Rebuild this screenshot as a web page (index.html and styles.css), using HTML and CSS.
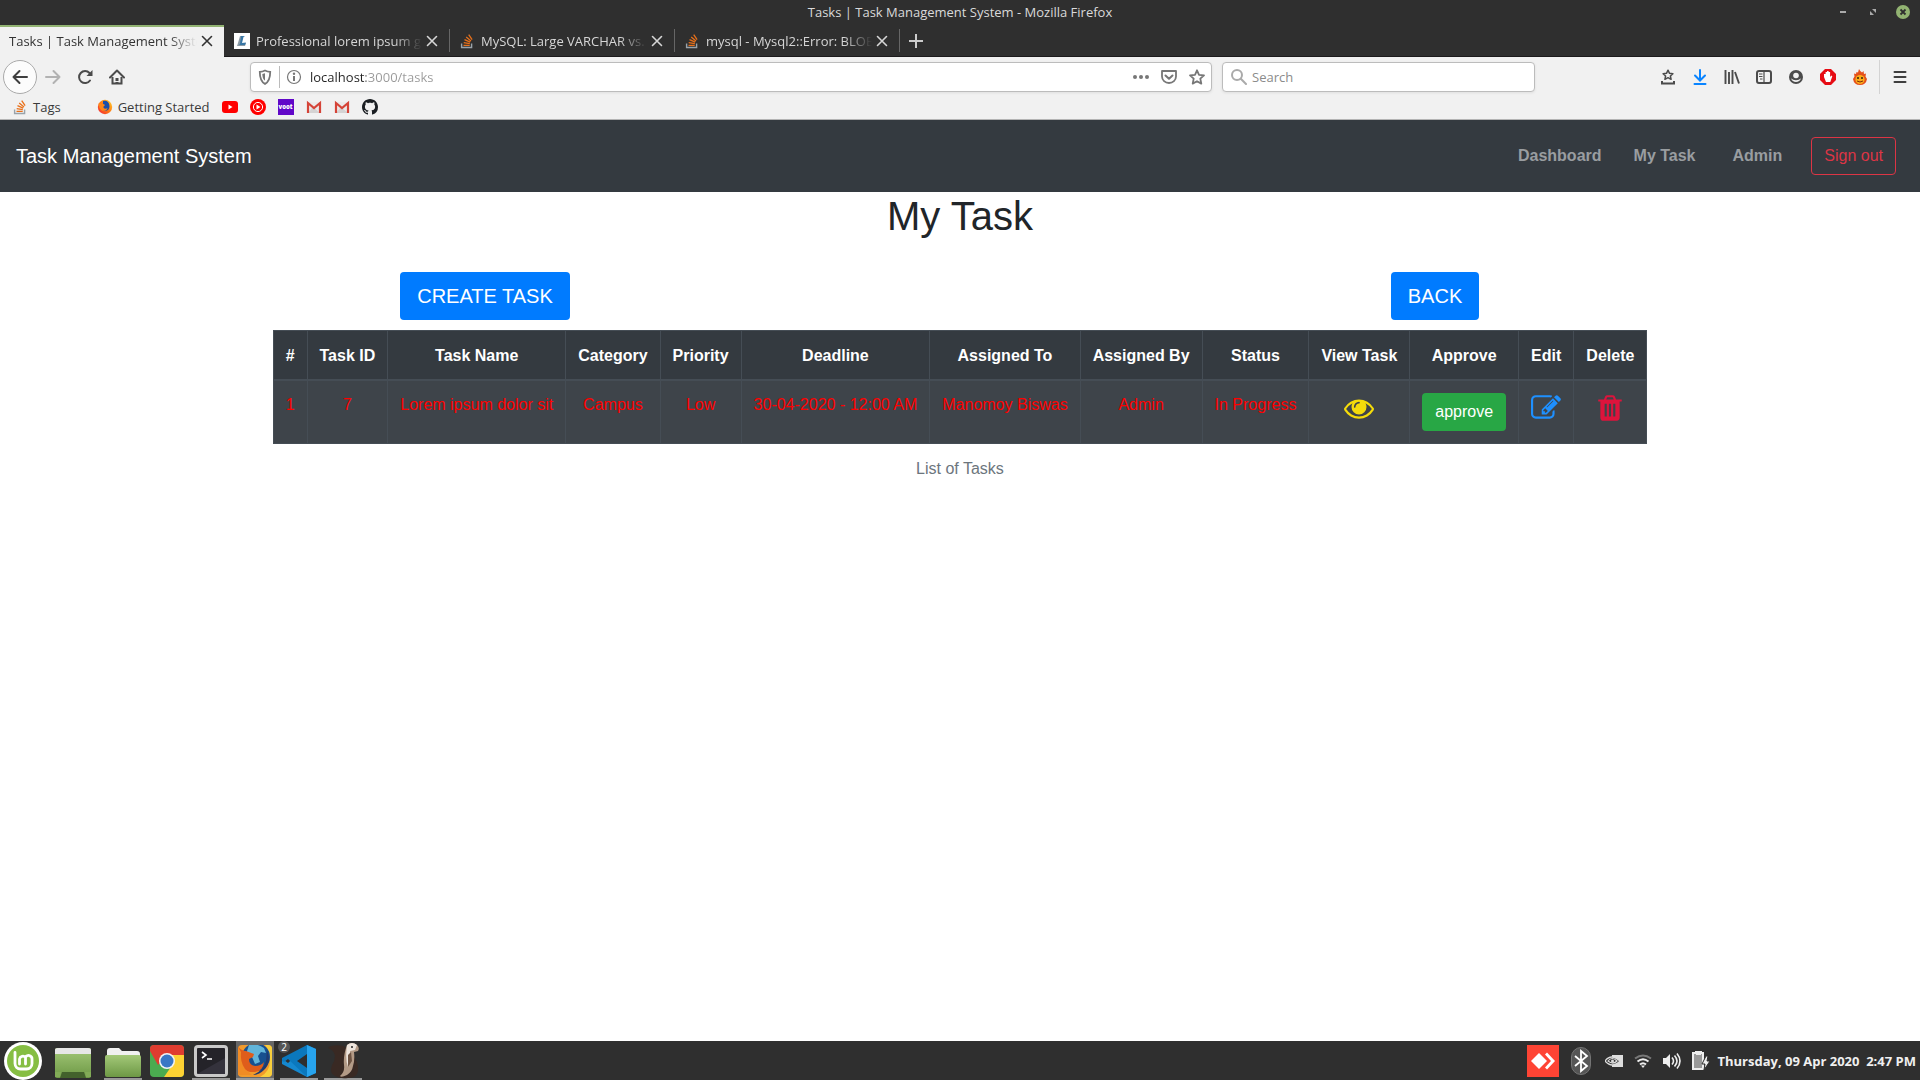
FILE: index.html
```html
<!DOCTYPE html>
<html lang="en">
<head>
<meta charset="utf-8">
<meta name="viewport" content="width=device-width, initial-scale=1">
<title>Tasks | Task Management System</title>
<link rel="stylesheet" href="styles.css">
</head>
<body>
<svg class="defs" aria-hidden="true">
  <defs>
    <symbol id="close" viewBox="0 0 16 16"><path d="M3.500 3.500l9 9M12.500 3.500l-9 9" stroke="currentColor" stroke-width="1.600" stroke-linecap="round"/></symbol>
    <symbol id="stack" viewBox="0 0 16 16"><path d="M2.600 10.500v4h10v-4" fill="none" stroke="#9aa3aa" stroke-width="1.400"/><path d="M4.500 12.300h6.200M4.700 9.600l6.100 1.100M5.500 6.700l5.700 2.500M7.200 3.900l4.800 4M9.700 1.600l3.400 5" stroke="#e8701a" stroke-width="1.300"/></symbol>
    <symbol id="gmail" viewBox="0 0 16 16"><path d="M2 3h12v11H2z" fill="#eceaea"/><path d="M2 14l5-6 7 6z" fill="#d5d3d3"/><path d="M2 14V4l6 5 6-5v10" fill="none" stroke="#d54438" stroke-width="2.200"/></symbol>
    <linearGradient id="green" x1="0" y1="0" x2="0" y2="1"><stop offset="0" stop-color="#a3c878"/><stop offset="1" stop-color="#6d9845"/></linearGradient>
    <linearGradient id="flame" x1="0" y1="1" x2="1" y2="0"><stop offset="0" stop-color="#f0203c"/><stop offset=".5" stop-color="#ff7a12"/><stop offset="1" stop-color="#ffd633"/></linearGradient>
  </defs>
</svg>

<header class="browser">
  <div class="titlebar">
    <span class="window-title">Tasks | Task Management System - Mozilla Firefox</span>
    <div class="window-controls">
      <button aria-label="Minimize"><svg width="14" height="14" viewBox="0 0 14 14"><path d="M4 7h6" stroke="#aaa" stroke-width="2"/></svg></button>
      <button aria-label="Restore"><svg width="14" height="14" viewBox="0 0 14 14"><path d="M6 4h4v4zM4 6v4h4z" fill="#aaa"/></svg></button>
      <button aria-label="Close window"><svg width="14" height="14" viewBox="0 0 14 14"><circle cx="7" cy="7" r="7" fill="#92b372"/><path d="M4.500 4.500l5 5M9.500 4.500l-5 5" stroke="#2f2f2f" stroke-width="1.800"/></svg></button>
    </div>
  </div>

  <div class="tabs">
    <div class="tab tab-active"><span class="tab-label">Tasks | Task Management System</span><button class="tab-close" aria-label="Close tab"><svg width="16" height="16"><use href="#close"/></svg></button></div>
    <div class="tab"><svg width="16" height="16" viewBox="0 0 16 16"><path d="M0 0h16v16H0z" fill="#fff"/><path d="M6 3h3L7 10h5l-1 3H3l1-3z" fill="#8b9aa5"/><path d="M7 3h4l-1.500 1L8 10l4-.5-1 2.500H5l1-1z" fill="#3977a5"/></svg><span class="tab-label">Professional lorem ipsum g</span><button class="tab-close" aria-label="Close tab"><svg width="16" height="16"><use href="#close"/></svg></button></div>
    <div class="tab"><svg width="16" height="16"><use href="#stack"/></svg><span class="tab-label">MySQL: Large VARCHAR vs.</span><button class="tab-close" aria-label="Close tab"><svg width="16" height="16"><use href="#close"/></svg></button></div>
    <div class="tab"><svg width="16" height="16"><use href="#stack"/></svg><span class="tab-label">mysql - Mysql2::Error: BLOB</span><button class="tab-close" aria-label="Close tab"><svg width="16" height="16"><use href="#close"/></svg></button></div>
    <button class="tab-new" aria-label="New tab"><svg width="16" height="16" viewBox="0 0 16 16"><path d="M8 1v14M1 8h14" stroke="#ccc" stroke-width="2"/></svg></button>
  </div>

  <div class="toolbar">
    <div class="nav-buttons">
      <button class="back" aria-label="Back"><svg width="16" height="16" viewBox="0 0 16 16"><path d="M15 8H1.500M7.500 2L1.500 8l6 6" fill="none" stroke="#3f3f3f" stroke-width="2" stroke-linecap="round" stroke-linejoin="round"/></svg></button>
      <button aria-label="Forward"><svg width="16" height="16" viewBox="0 0 16 16"><path d="M1 8h13.500M8.500 2l6 6-6 6" fill="none" stroke="#b2b2b2" stroke-width="2" stroke-linecap="round" stroke-linejoin="round"/></svg></button>
      <button aria-label="Reload"><svg width="16" height="16" viewBox="0 0 16 16"><path d="M13 11.500A6 6 0 1 1 12.500 4" fill="none" stroke="#4b4b4b" stroke-width="2" stroke-linecap="round"/><path d="M15.500 1v6H9.500z" fill="#4b4b4b"/></svg></button>
      <button aria-label="Home"><svg width="16" height="16" viewBox="0 0 16 16"><path d="M1 8.500L8 1.500l7 7" fill="none" stroke="#4b4b4b" stroke-width="2" stroke-linecap="round" stroke-linejoin="round"/><path d="M3.500 8v6.500h9V8" fill="none" stroke="#4b4b4b" stroke-width="2"/><path d="M6.500 9h3v3h-3zM6.500 13h3v2h-3z" fill="#4b4b4b"/></svg></button>
    </div>
    <div class="toolbar-space"></div>
    <div class="field url-field">
      <svg width="16" height="16" viewBox="0 0 16 16"><path d="M8 1.500c2 1 3.500 1.300 5.200 1.400 0 6-1 9.600-5.200 12-4.200-2.400-5.200-6-5.200-12C4.500 2.800 6 2.500 8 1.500z" fill="none" stroke="#777" stroke-width="1.800"/><path d="M8 4.200v7.600c-2-1.700-2.600-4-2.700-6.900z" fill="#777"/></svg>
      <span class="field-line"></span>
      <svg width="16" height="16" viewBox="0 0 16 16"><circle cx="8" cy="8" r="6.500" fill="none" stroke="#777" stroke-width="1.200"/><path d="M8 7v5" stroke="#777" stroke-width="2"/><circle cx="8" cy="4.800" r="1.200" fill="#777"/></svg>
      <input class="url-input" type="text" aria-label="Address" value="localhost:3000/tasks">
      <button aria-label="Page actions"><svg width="16" height="16" viewBox="0 0 16 16"><g fill="#777"><circle cx="2" cy="8" r="2"/><circle cx="8" cy="8" r="2"/><circle cx="14" cy="8" r="2"/></g></svg></button>
      <button aria-label="Save to Pocket"><svg width="16" height="16" viewBox="0 0 16 16"><path d="M1 2h14v5.500a7 6.500 0 0 1-14 0z" fill="none" stroke="#777" stroke-width="1.800" stroke-linejoin="round"/><path d="M4.500 6.500L8 9.800l3.500-3.300" fill="none" stroke="#777" stroke-width="2" stroke-linecap="round" stroke-linejoin="round"/></svg></button>
      <button aria-label="Bookmark this page"><svg width="16" height="16" viewBox="0 0 16 16"><path d="M8 1.300l2 4.500 5 .5-3.700 3.300 1 5L8 12.200l-4.300 2.400 1-5L1 6.300l5-.5z" fill="none" stroke="#777" stroke-width="1.800" stroke-linejoin="round"/></svg></button>
    </div>
    <div class="field search-field">
      <svg width="16" height="16" viewBox="0 0 16 16"><circle cx="6" cy="6" r="5" fill="none" stroke="#aaa" stroke-width="2"/><path d="M9.800 9.800l5.200 5.200" stroke="#aaa" stroke-width="2" stroke-linecap="round"/></svg>
      <input type="search" aria-label="Search" placeholder="Search">
    </div>
    <div class="toolbar-space"></div>
    <div class="tool-buttons">
      <button aria-label="Bookmarks menu"><svg width="16" height="16" viewBox="0 0 16 16"><path d="M8 1.200l1.500 3.100 3.400.4-2.500 2.300.7 3.300L8 8.700l-3.100 1.600.7-3.300-2.500-2.300 3.400-.4z" fill="none" stroke="#4b4b4b" stroke-width="1.500" stroke-linejoin="round"/><path d="M2 12v2.500h12V12" fill="none" stroke="#4b4b4b" stroke-width="2"/></svg></button>
      <button aria-label="Downloads"><svg width="16" height="16" viewBox="0 0 16 16"><path d="M8 1v10M3 6.500l5 5 5-5M2.500 15h11" fill="none" stroke="#0a84ff" stroke-width="2" stroke-linecap="round"/></svg></button>
      <button aria-label="Library"><svg width="16" height="16" viewBox="0 0 16 16"><path d="M1.500 1v14M5 3v12M8.500 1v14M11 3l4 11.500" stroke="#4b4b4b" stroke-width="1.900"/></svg></button>
      <button aria-label="Sidebars"><svg width="16" height="16" viewBox="0 0 16 16"><rect x="1" y="2" width="14" height="12" rx="2" fill="none" stroke="#4b4b4b" stroke-width="2"/><path d="M8 2v12" stroke="#4b4b4b" stroke-width="1.200"/><path d="M3 5h3.500M3 7.500h3.500M4 10h2.500" stroke="#4b4b4b"/></svg></button>
      <button aria-label="Account"><svg width="16" height="16" viewBox="0 0 16 16"><circle cx="8" cy="8" r="7" fill="#4b4b4b"/><circle cx="8" cy="6.500" r="2.800" fill="#f1f1f1"/><path d="M3.200 9.300c1.800 2.500 7.800 2.500 9.600 0-.6 5-9 5-9.600 0z" fill="#f1f1f1"/></svg></button>
      <button aria-label="Ad blocker"><svg width="16" height="16" viewBox="0 0 16 16"><path d="M5 0h6l5 5v6l-5 5H5l-5-5V5z" fill="#e60c14"/><path d="M4 8V5h1.600V3h1.500V2h1.500v1h1.500v5l1.200-1.500 1 .8-2 5.700H6z" fill="#fff"/></svg></button>
      <button aria-label="Flame extension"><svg width="16" height="16" viewBox="0 0 16 16"><path d="M7 0q1 2 3 3.500L11.500 2l.5 3 2-.5-.5 3L15 10q-1 6-7 6T1 10l1.500-2.500L2 4.500l2 .5.500-2L6 3.500z" fill="#e5501b"/><ellipse cx="8" cy="10.500" rx="4.600" ry="4.600" fill="#fbac19"/><circle cx="6" cy="9" r="1" fill="#33200b"/><circle cx="10" cy="9" r="1" fill="#33200b"/><path d="M5 12q3 2 6 0" fill="none" stroke="#7b2a0a"/></svg></button>
    </div>
    <button class="menu" aria-label="Open menu"><svg width="16" height="16" viewBox="0 0 16 16"><path d="M2.500 3h11M2.500 8h11M2.500 13h11" stroke="#3f3f3f" stroke-width="2" stroke-linecap="round"/></svg></button>
  </div>

  <nav class="bookmarks" aria-label="Bookmarks">
    <a class="bookmark-tags" href="#"><svg width="16" height="16"><use href="#stack"/></svg>Tags</a>
    <a href="#"><svg width="16" height="16" viewBox="0 0 16 16"><circle cx="8" cy="8" r="7.200" fill="url(#flame)"/><path d="M6 2c3-1 6.500.5 6.500 5.500 0 3.500-3 5-5.500 4C4 10.500 4.500 7 6 5.500z" fill="#1b4fa8"/><path d="M1.500 4.500C4 4 5 5 7.500 5.500 8.500 7 6 7 6.500 8.500s3 1.500 4 .5c-.5 3.500-6 4-8 0z" fill="#ff8717"/></svg>Getting Started</a>
    <a href="#" aria-label="YouTube"><svg width="16" height="16" viewBox="0 0 16 16"><rect y="2" width="16" height="12" rx="3" fill="#f00"/><path d="M6.500 5.500v5l4-2.500z" fill="#fff"/></svg></a>
    <a href="#" aria-label="YouTube Music"><svg width="16" height="16" viewBox="0 0 16 16"><circle cx="8" cy="8" r="8" fill="#f00"/><circle cx="8" cy="8" r="4.600" fill="none" stroke="#fff"/><path d="M6.500 5.500v5l4-2.500z" fill="#fff"/></svg></a>
    <a class="voot" href="#">voot</a>
    <a href="#" aria-label="Gmail"><svg width="16" height="16"><use href="#gmail"/></svg></a>
    <a href="#" aria-label="Gmail second account"><svg width="16" height="16"><use href="#gmail"/></svg></a>
    <a href="#" aria-label="GitHub"><svg width="16" height="16" viewBox="0 0 16 16"><path fill="#1b1f23" d="M8 0C3.580 0 0 3.580 0 8c0 3.540 2.290 6.530 5.470 7.590.4.070.55-.17.55-.38 0-.19-.01-.82-.01-1.490-2.010.37-2.530-.49-2.690-.94-.09-.23-.48-.94-.82-1.130-.28-.15-.68-.52-.01-.53.63-.01 1.080.58 1.230.82.72 1.210 1.870.87 2.330.66.070-.52.28-.87.51-1.070-1.780-.2-3.640-.89-3.640-3.950 0-.87.31-1.590.82-2.150-.08-.2-.36-1.020.08-2.120 0 0 .67-.21 2.200.82.64-.18 1.320-.27 2-.27s1.360.09 2 .27c1.530-1.040 2.200-.82 2.200-.82.44 1.100.16 1.920.08 2.120.51.56.82 1.270.82 2.150 0 3.070-1.870 3.750-3.650 3.950.29.25.54.73.54 1.480 0 1.070-.01 1.930-.01 2.200 0 .21.15.46.55.38A8.010 8.010 0 0 0 16 8c0-4.420-3.580-8-8-8z"/></svg></a>
  </nav>
</header>

<div class="page">
  <nav class="navbar" aria-label="Main">
    <a class="brand" href="#">Task Management System</a>
    <a class="nav-link" href="#">Dashboard</a>
    <a class="nav-link" href="#">My Task</a>
    <span class="nav-user">Admin</span>
    <a class="btn btn-outline" href="#">Sign out</a>
  </nav>
  <main>
    <h1>My Task</h1>
    <div class="actions">
      <div><a class="btn btn-lg" href="#">CREATE TASK</a></div>
      <div><a class="btn btn-lg" href="#">BACK</a></div>
    </div>
    <table class="tasks">
      <caption>List of Tasks</caption>
      <thead>
        <tr><th>#</th><th>Task ID</th><th>Task Name</th><th>Category</th><th>Priority</th><th>Deadline</th><th>Assigned To</th><th>Assigned By</th><th>Status</th><th>View Task</th><th>Approve</th><th>Edit</th><th>Delete</th></tr>
      </thead>
      <tbody>
        <tr>
          <td>1</td><td>7</td><td>Lorem ipsum dolor sit</td><td>Campus</td><td>Low</td><td>30-04-2020 - 12:00 AM</td><td>Manomoy Biswas</td><td>Admin</td><td>In Progress</td>
          <td><a class="icon icon-view" href="#" aria-label="View"><svg width="30" height="30" viewBox="0 0 1792 1792"><path d="M1664 960q-152-236-381-353 61 104 61 225 0 185-131.500 316.500t-316.500 131.500-316.500-131.500-131.500-316.500q0-121 61-225-229 117-381 353 133 205 333.500 326.500t434.500 121.500 434.500-121.500 333.500-326.500zm-720-384q0-20-14-34t-34-14q-125 0-214.500 89.500t-89.500 214.500q0 20 14 34t34 14 34-14 14-34q0-86 61-147t147-61q20 0 34-14t14-34zm848 384q0 34-20 69-140 230-376.500 368.500t-499.500 138.500-499.500-139-376.500-368q-20-35-20-69t20-69q140-229 376.500-368t499.500-139 499.500 139 376.500 368q20 35 20 69z"/></svg></a></td>
          <td><button class="btn btn-success">approve</button></td>
          <td><a class="icon icon-edit" href="#" aria-label="Edit"><svg width="30" height="30" viewBox="0 0 1792 1792"><path d="M888 1184l116-116-152-152-116 116v56h96v96h56zm440-720q-16-16-33 1l-350 350q-17 17-1 33t33-1l350-350q17-17 1-33zm80 594v190q0 119-84.500 203.500t-203.500 84.500h-832q-119 0-203.500-84.500t-84.500-203.500v-832q0-119 84.500-203.500t203.500-84.500h832q63 0 117 25 15 7 18 23 3 17-9 29l-49 49q-14 14-32 8-23-6-45-6h-832q-66 0-113 47t-47 113v832q0 66 47 113t113 47h832q66 0 113-47t47-113v-126q0-13 9-22l64-64q15-15 35-7t20 29zm-96-738l288 288-672 672h-288v-288zm444 132l-92 92-288-288 92-92q28-28 68-28t68 28l152 152q28 28 28 68t-28 68z"/></svg></a></td>
          <td><a class="icon icon-delete" href="#" aria-label="Delete"><svg width="30" height="30" viewBox="0 0 1792 1792"><path d="M704 1376v-704q0-14-9-23t-23-9h-64q-14 0-23 9t-9 23v704q0 14 9 23t23 9h64q14 0 23-9t9-23zm256 0v-704q0-14-9-23t-23-9h-64q-14 0-23 9t-9 23v704q0 14 9 23t23 9h64q14 0 23-9t9-23zm256 0v-704q0-14-9-23t-23-9h-64q-14 0-23 9t-9 23v704q0 14 9 23t23 9h64q14 0 23-9t9-23zm-544-992h448l-48-117q-7-9-17-11h-317q-10 2-17 11zm928 32v64q0 14-9 23t-23 9h-96v948q0 83-47 143.500t-113 60.500h-832q-66 0-113-58.500t-47-141.500v-952h-96q-14 0-23-9t-9-23v-64q0-14 9-23t23-9h309l70-167q15-37 54-63t79-26h320q40 0 79 26t54 63l70 167h309q14 0 23 9t9 23z"/></svg></a></td>
        </tr>
      </tbody>
    </table>
  </main>
</div>

<footer class="taskbar">
  <button class="start" aria-label="Menu"><svg width="38" height="38" viewBox="0 0 38 38"><circle cx="19" cy="19" r="19" fill="#fff"/><circle cx="19" cy="19" r="16" fill="#86be43"/><path d="M11 10.500v11a5.500 5.500 0 0 0 5.500 5.500h6a5.500 5.500 0 0 0 5.500-5.500V17a3.400 3.400 0 0 0-6.500-1.500A3.400 3.400 0 0 0 15.500 17v5M21.500 15.500V22" fill="none" stroke="#fff" stroke-width="2.800" stroke-linecap="round"/></svg></button>
  <button class="desktop" aria-label="Show desktop"><svg width="38" height="38" viewBox="0 0 38 38"><rect x="1" y="6" width="36" height="30" rx="2" fill="url(#green)"/><path d="M1 8q0-2 3-2h30q3 0 3 2v4H1z" fill="#e6e6e6"/><path d="M6 36l2-6h22l2 6z" fill="#43622c"/><path d="M1 30h6l-1 5H1zM37 30h-6l1 5h5z" fill="#82ab57"/></svg></button>
  <button class="launcher running" aria-label="Files"><svg width="38" height="38" viewBox="0 0 38 38"><path d="M3 9q0-3 3-3h9l3 3h15q3 0 3 3v5H3z" fill="#f0f0f0"/><rect x="1" y="13" width="36" height="22" rx="2" fill="url(#green)"/></svg></button>
  <button class="launcher" aria-label="Chrome"><svg width="38" height="38" viewBox="0 0 38 38"><clipPath id="chrome"><rect x="2" y="3" width="34" height="32" rx="4"/></clipPath><g clip-path="url(#chrome)"><path d="M2 2h34v33H2z" fill="#4bab50"/><path d="M2 2h34v11H19l-9 10L2 9z" fill="#df3c30"/><path d="M19 13h17v22H16l9-13z" fill="#fdd233"/></g><circle cx="19" cy="19" r="8" fill="#f3f3f3"/><circle cx="19" cy="19" r="6.500" fill="#3977c5"/></svg></button>
  <button class="launcher running" aria-label="Terminal"><svg width="38" height="38" viewBox="0 0 38 38"><rect x="2" y="3" width="34" height="32" rx="4" fill="#c9c9c9"/><rect x="5" y="6" width="28" height="26" rx="1" fill="#242329"/><path d="M5 32L33 16v16z" fill="#34323c"/><path d="M10 10l4 3-4 3M15 17h5" fill="none" stroke="#fff" stroke-width="1.600"/></svg></button>
  <button class="launcher running current" aria-label="Firefox"><svg width="38" height="38" viewBox="0 0 38 38"><clipPath id="fox"><rect x="2" y="3" width="34" height="32" rx="4"/></clipPath><g clip-path="url(#fox)"><path d="M2 3h34v32H2z" fill="#f19a2b"/><path d="M29 3h7v32H24q10-5 10-17 0-9-5-15z" fill="#f8cf3c"/><circle cx="20" cy="15" r="14" fill="#17508f"/><path d="M13 3q8-2 15 3l2 5-5-1-3 4 2 6-5 2-3-7-6-3z" fill="#62b5d9"/><path d="M2 5q4 4 8 4l8 3-1 3-4 2q0 6 6 7 6 0 9-4-1 9-9 10Q5 31 2 18z" fill="#df5d1b"/><path d="M2 5l3 5q-1 10 4 17l7 6H2z" fill="#f08c24"/><path d="M31 8q5 12-3 20-5 5-11 5 11-5 13-14z" fill="#203a70"/></g></svg></button>
  <button class="launcher running" aria-label="Visual Studio Code, 2 windows"><svg width="38" height="38" viewBox="0 0 38 38"><path d="M27 3L8 21l-4-3-2 1v3l25 13z" fill="#1588cf"/><path d="M27 35L8 17l-4 3-2-1v-3L27 3l9 4v24z" fill="#0b78bd"/><path d="M27 3l9 4v24l-9 4z" fill="#27a4ee"/><path d="M27 12v14l-10-7z" fill="#2e2e2e"/></svg><span class="badge">2</span></button>
  <button class="launcher running" aria-label="DBeaver"><svg width="38" height="38" viewBox="0 0 38 38"><path d="M20 4Q8 2 4 6q6 2 7 8 0 5-3 9-3 8 3 11 5 3 13 2 9 0 10-7 1-10-6-16z" fill="#392923"/><path d="M23 3q5-4 10 0 3 3 1 6l-4 1q1 8-1 14-1 6-6 9-6 3-7 1 5-4 4-11-1-9 3-20z" fill="#b39a86"/><path d="M23 3q5-4 10 0l-2 5-5 1q2 7-2 16-3-8-1-22z" fill="#eee5dd"/><path d="M24 13l3-3 1 9-4 6z" fill="#6d5342"/><circle cx="28" cy="5" r="1" fill="#222"/></svg></button>

  <div class="tray">
    <svg width="32" height="32" viewBox="0 0 32 32"><path d="M0 0h32v32H0z" fill="#fe4434"/><path d="M12 8l8 8-8 8-8-8z" fill="#fff"/><path d="M18 9.500l2-2 8 8.500-8 8.500-2-2 6-6.500z" fill="#fff"/></svg>
    <svg class="tray-bluetooth" width="20" height="28" viewBox="0 0 20 28"><rect x=".5" y=".5" width="19" height="27" rx="9.500" fill="#555" stroke="#747474"/><path d="M4 9l12 10-6 5V4l6 5L4 19" fill="none" stroke="#fff" stroke-width="1.800"/></svg>
    <svg width="18" height="14" viewBox="0 0 18 14"><path d="M7 1h11v12H7z" fill="#ddd"/><path d="M0 7q6-8 15 0-8 8-15 0z" fill="#2f2f2f" stroke="#ddd" stroke-width="1.300"/><path d="M3 7q4-5 9 0-4 4-9 0z" fill="none" stroke="#ddd" stroke-width="1.200"/><circle cx="7.500" cy="7" r="1.500" fill="#ddd"/></svg>
    <svg width="18" height="14" viewBox="0 0 18 14"><path d="M1 4.500q8-6 16 0" fill="none" stroke="#777" stroke-width="2"/><path d="M3.500 7.500q5.500-4.500 11 0M6 10.500q3-2.500 6 0" fill="none" stroke="#eee" stroke-width="2"/><path d="M7 11.500h4L9 14z" fill="#eee"/></svg>
    <svg width="18" height="18" viewBox="0 0 18 18"><path d="M0 6h3l4-4v14l-4-4H0z" fill="#eee"/><path d="M9 5.500q3 3.500 0 7M11.500 3.500q5 5.500 0 11M14 1.500q6 7.500 0 15" fill="none" stroke="#eee" stroke-width="1.600"/></svg>
    <svg width="18" height="20" viewBox="0 0 18 20"><path d="M4 2V1h5v1h2v16H1V2z" fill="#999" stroke="#eee" stroke-width="2"/><path d="M4 0h5v4H4z" fill="#eee"/><path d="M14 5l-4 8h3l-1 6 6-9h-3l1-5z" fill="#eee" stroke="#2f2f2f"/></svg>
    <time class="clock" datetime="2020-04-09T14:47">Thursday, 09 Apr 2020&nbsp; 2:47 PM</time>
  </div>
</footer>
</body>
</html>
```
FILE: styles.css
```css
*,
*::before,
*::after {
  box-sizing: border-box;
}

body {
  margin: 0;
  min-height: 100vh;
  display: flex;
  flex-direction: column;
  background: #fff;
  color: #212529;
  font: 16px/24px "Liberation Sans", Arial, sans-serif;
}

a {
  color: inherit;
  text-decoration: none;
}

button,
input {
  margin: 0;
  padding: 0;
  border: 0;
  background: none;
  color: inherit;
  font: inherit;
}

svg {
  display: block;
  flex: none;
}

.defs {
  position: absolute;
  width: 0;
  height: 0;
}

/* Browser window */

.browser {
  background: #f1f1f1;
  border-bottom: 1px solid #b4b4b4;
  font: 13px/20px "Open Sans", "Noto Sans", sans-serif;
  color: #3a3a3a;
}

.titlebar {
  display: grid;
  grid-template-columns: 1fr auto 1fr;
  align-items: center;
  height: 25px;
  padding: 0 10px 1px;
  background: #2f2f2f;
  color: #dadada;
}

.window-title {
  grid-column: 2;
  font-weight: 500;
}

.window-controls {
  display: flex;
  justify-content: flex-end;
  gap: 16px;
}

.tabs {
  display: flex;
  height: 32px;
  background: #2f2f2f;
  border-bottom: 1px solid #1c1a1c;
  color: #d6d6d6;
}

.tab {
  position: relative;
  display: flex;
  align-items: center;
  width: 225px;
  padding: 0 9px 0 10px;
}

.tab::after {
  content: "";
  position: absolute;
  right: -1px;
  top: 4px;
  bottom: 4px;
  width: 1px;
  background: #666;
}

.tab-label {
  flex: 1;
  min-width: 0;
  margin: 0 2px 0 6px;
  overflow: hidden;
  white-space: nowrap;
  mask-image: linear-gradient(to left, transparent, #000 28px);
}

.tab-active {
  margin-bottom: -1px;
  width: 224px;
  padding: 0 9px 2px;
  border-top: 2px solid #92b372;
  background: #f1f1f1;
  color: #333;
}

.tab-active .tab-label {
  margin-left: 0;
}

.tab-active::after {
  content: none;
}

.tab-new {
  padding: 0 9px;
}

.toolbar {
  display: flex;
  align-items: center;
  height: 40px;
}

.nav-buttons,
.tool-buttons {
  display: flex;
  align-items: center;
}

.nav-buttons {
  padding-left: 3px;
}

.nav-buttons button,
.tool-buttons button {
  display: grid;
  place-items: center;
  width: 32px;
  height: 34px;
}

.nav-buttons .back {
  width: 34px;
  border: 1px solid #aaa;
  border-radius: 50%;
  background: #fcfcfc;
}

.toolbar-space {
  flex: 117 1 117px;
}

.field {
  display: flex;
  align-items: center;
  gap: 12px;
  height: 30px;
  border: 1px solid #bcbcbc;
  border-radius: 4px;
  background: #fff;
  box-shadow: 0 1px 3px rgba(0, 0, 0, 0.08);
}

.field input {
  flex: 1;
  min-width: 0;
  outline: 0;
}

.field input::placeholder {
  color: #8b8b8b;
  opacity: 1;
}

.url-field {
  flex: 962 1 962px;
  padding: 0 6px;
}

.url-field > :first-child,
.field-line {
  margin-right: -6px;
}

.field-line {
  width: 1px;
  height: 22px;
  background: #bbb;
}

/* The host is darker than the rest of the address */
.url-field .url-input {
  margin-left: -4px;
  color: #999;
  background: linear-gradient(to right, #222 56px, #999 56px);
  background-clip: text;
  -webkit-background-clip: text;
  -webkit-text-fill-color: transparent;
}

.search-field {
  flex: 313 1 313px;
  gap: 5px;
  margin-left: 10px;
  padding: 0 8px;
}

.menu {
  display: grid;
  place-items: center;
  width: 41px;
  height: 34px;
  margin-left: 3px;
  border-left: 1px solid #d3d3d3;
}

.bookmarks {
  display: flex;
  align-items: center;
  gap: 12px;
  height: 22px;
  padding: 0 12px 2px;
}

.bookmarks a {
  display: flex;
  align-items: center;
  gap: 5px;
}

.bookmarks .bookmark-tags {
  margin-right: 24px;
}

.bookmarks .voot {
  justify-content: center;
  width: 16px;
  height: 16px;
  background: #6108c8;
  color: #fff;
  font-size: 6px;
  font-weight: 800;
}

/* Page */

.page {
  flex: 1;
}

.navbar {
  display: flex;
  align-items: center;
  height: 72px;
  padding: 0 24px 0 16px;
  background: #343a40;
  color: #999da0;
  font-weight: bold;
}

.brand {
  margin-right: auto;
  color: #fff;
  font-size: 20px;
  line-height: 30px;
  font-weight: normal;
}

.nav-link {
  padding: 0 16px;
}

.nav-user {
  padding: 0 29px 0 21px;
}

h1 {
  margin: 0 0 32px;
  text-align: center;
  font-size: 40px;
  line-height: 48px;
  font-weight: normal;
}

.btn {
  display: inline-block;
  padding: 6px 12px;
  border: 1px solid transparent;
  border-radius: 4px;
  color: #fff;
  font-size: 16px;
  line-height: 24px;
  font-weight: normal;
}

.btn-lg {
  padding: 8px 16px;
  background: #007bff;
  font-size: 20px;
  line-height: 30px;
}

.btn-outline {
  border-color: #dc3545;
  color: #dc3545;
}

.btn-success {
  background: #28a745;
}

.actions {
  display: grid;
  grid-template-columns: 1fr 1fr;
  padding: 0 10px;
  text-align: center;
}

.tasks {
  margin: 10px auto 0;
  border-collapse: collapse;
  border: 1px solid #454d55;
  background: #343a40;
  color: #fff;
  text-align: center;
}

.tasks caption {
  caption-side: bottom;
  padding: 13px 0 12px;
  color: #6c757d;
}

.tasks th,
.tasks td {
  padding: 12px;
  border: 1px solid #454d55;
  vertical-align: top;
}

.tasks th {
  padding: 13px 12px 11px;
  border-bottom-width: 2px;
  white-space: nowrap;
}

.tasks td {
  background: #3e444a;
  color: #f00;
}

.icon {
  display: flex;
  justify-content: center;
}

.icon svg {
  fill: currentColor;
}

.icon-view {
  color: #f5dc0a;
}

.icon-edit {
  color: #1e90ff;
}

.icon-delete {
  color: #dc143c;
}

/* Desktop panel */

.taskbar {
  display: flex;
  align-items: center;
  gap: 6px;
  height: 39px;
  padding: 0 4px;
  background: #2f2f2f;
  color: #f0f0f0;
}

.desktop {
  margin: 0 6px;
}

.launcher {
  position: relative;
  height: 39px;
}

.running {
  box-shadow: inset 0 -2px #999;
}

.current {
  background: #666;
}

.badge {
  position: absolute;
  left: -2px;
  top: 0;
  width: 12px;
  height: 12px;
  border-radius: 50%;
  background: #555;
  color: #fff;
  font: 10px/12px "Open Sans", sans-serif;
}

.tray {
  display: flex;
  align-items: center;
  gap: 11px;
  margin-left: auto;
}

.tray-bluetooth {
  margin: 0 3px 0 1px;
}

.clock {
  margin-left: -4px;
  padding-top: 1px;
  white-space: nowrap;
  font: bold 13px/20px "Open Sans", "Noto Sans", sans-serif;
}
```
